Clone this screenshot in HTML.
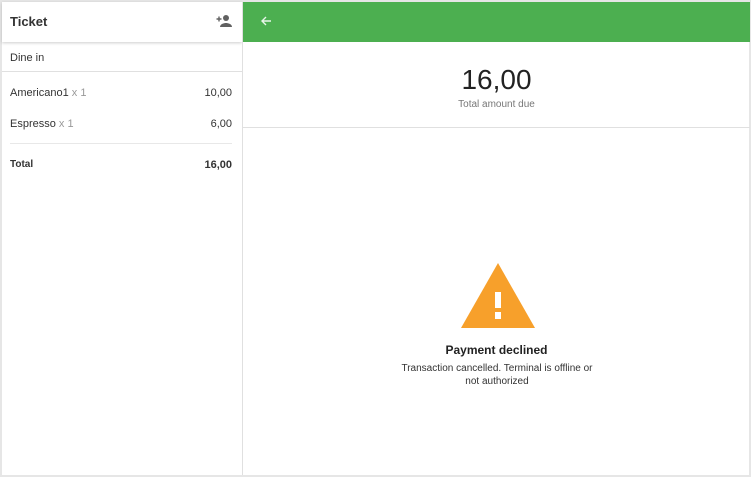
<!DOCTYPE html>
<html><head><style>
*{margin:0;padding:0;box-sizing:border-box}
body{width:751px;height:477px;background:#e6e6e6;font-family:"Liberation Sans",sans-serif;position:relative;overflow:hidden;color:#212121}
.left{position:absolute;left:2px;top:2px;width:240px;height:473px;background:#fff}
.right{position:absolute;left:242px;top:2px;width:507px;height:473px;background:#fff;border-left:1px solid #e0e0e0}
.hdr{position:absolute;left:0;top:0;width:240px;height:40px;background:#fff;box-shadow:0 1px 3px rgba(0,0,0,.2)}
.t{position:absolute;font-size:11px}
.g{position:absolute;left:0;top:0;width:507px;height:40px;background:#4caf50}
</style></head><body>
<div class="left">
<div class="hdr">
<div class="t" style="left:8px;top:12px;font-size:13px;font-weight:bold;color:#333">Ticket</div>
<svg style="position:absolute;left:214px;top:12px" width="16" height="14" viewBox="0 0 16 14"><circle cx="10" cy="4" r="3" fill="#616161"/><path d="M4 13c0-3 4-4 6-4s6 1 6 4z" fill="#616161"/><path d="M0.5 5h5M3 2.5v5" stroke="#616161" stroke-width="1.4"/></svg>
</div>
<div class="t" style="left:8px;top:50px;color:#333">Dine in</div>
<div style="position:absolute;left:0;top:69px;width:240px;height:1px;background:#e0e0e0"></div>
<div class="t" style="left:8px;top:85px;color:#333">Americano1 <span style="color:#999">x 1</span></div>
<div class="t" style="right:10px;top:85px;color:#333">10,00</div>
<div class="t" style="left:8px;top:116px;color:#333">Espresso <span style="color:#999">x 1</span></div>
<div class="t" style="right:10px;top:116px;color:#333">6,00</div>
<div style="position:absolute;left:8px;top:141px;width:222px;height:1px;background:#e8e8e8"></div>
<div class="t" style="left:8px;top:157px;font-weight:bold;color:#333;font-size:10px">Total</div>
<div class="t" style="right:10px;top:157px;font-weight:bold;color:#333">16,00</div>
</div>
<div class="right">
<div class="g"><svg style="position:absolute;left:17px;top:13px" width="12" height="12" viewBox="0 0 12 12"><path d="M11 6H2M6 2L2 6l4 4" stroke="#e8f5e9" stroke-width="1.4" fill="none"/></svg></div>
<div class="t" style="left:0;width:507px;text-align:center;top:62px;font-size:28px;color:#222">16,00</div>
<div class="t" style="left:0;width:507px;text-align:center;top:97px;font-size:10px;color:#777">Total amount due</div>
<div style="position:absolute;left:0;top:125px;width:507px;height:1px;background:#e0e0e0"></div>
<svg style="position:absolute;left:216px;top:260px" width="78" height="67" viewBox="0 0 78 67"><path d="M39 1L2 66h74z" fill="#f7a02b"/><rect x="36" y="30" width="6" height="16" fill="#fff"/><rect x="36" y="50" width="6" height="7" fill="#fff"/></svg>
<div class="t" style="left:0;width:507px;text-align:center;top:341px;font-size:12px;font-weight:bold;color:#222">Payment declined</div>
<div class="t" style="left:154px;width:200px;text-align:center;top:360px;font-size:10px;line-height:13px;color:#333">Transaction cancelled. Terminal is offline or not authorized</div>
</div>
</body></html>
